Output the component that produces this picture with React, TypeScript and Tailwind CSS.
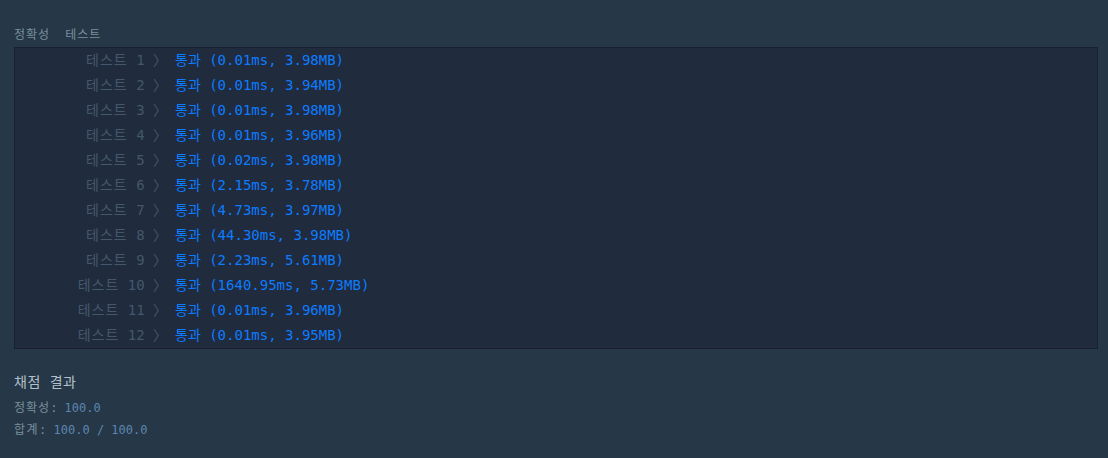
const FONT = "font-['DejaVu_Sans_Mono','Noto_Sans_CJK_KR',monospace]";

const results = [
  "(0.01ms, 3.98MB)",
  "(0.01ms, 3.94MB)",
  "(0.01ms, 3.98MB)",
  "(0.01ms, 3.96MB)",
  "(0.02ms, 3.98MB)",
  "(2.15ms, 3.78MB)",
  "(4.73ms, 3.97MB)",
  "(44.30ms, 3.98MB)",
  "(2.23ms, 5.61MB)",
  "(1640.95ms, 5.73MB)",
  "(0.01ms, 3.96MB)",
  "(0.01ms, 3.95MB)",
];

export default function App() {
  return (
    <div className={`min-h-[458px] w-full bg-[#263747] ${FONT} pt-[26px] pl-[14px] pr-[10px]`}>
      {/* section title */}
      <div className="flex gap-[15px] text-[12px] leading-[18px] text-[#78909c] tracking-[1px]">
        <span>정확성</span>
        <span>테스트</span>
      </div>

      {/* output box */}
      <div className="mt-[3px] bg-[#202b3d] border border-[#172130]">
        {results.map((r, i) => (
          <div key={i} className="flex h-[25px] items-center text-[14px] whitespace-pre">
            <span className="w-[152px] text-right text-[#44576c]">
              <span className="tracking-[1px]">테스트</span>
              {` ${i + 1} 〉`}
            </span>
            <span className="ml-[8px] text-[#0d7cff]">{`통과 ${r}`}</span>
          </div>
        ))}
      </div>

      {/* score */}
      <div className="mt-[23px] text-[14px] leading-[20px] text-[#b2c0cc] tracking-[0.5px]">채점 결과</div>
      <div className="mt-[5px] text-[12px] leading-[22px] whitespace-pre">
        <div>
          <span className="text-[#78909c]">
            <span className="tracking-[1px]">정확성</span>:{" "}
          </span>
          <span className="text-[#5c86b0]">100.0</span>
        </div>
        <div>
          <span className="text-[#78909c]">
            <span className="tracking-[1.5px]">합계</span>:{" "}
          </span>
          <span className="text-[#5c86b0]">100.0 / 100.0</span>
        </div>
      </div>
    </div>
  );
}
